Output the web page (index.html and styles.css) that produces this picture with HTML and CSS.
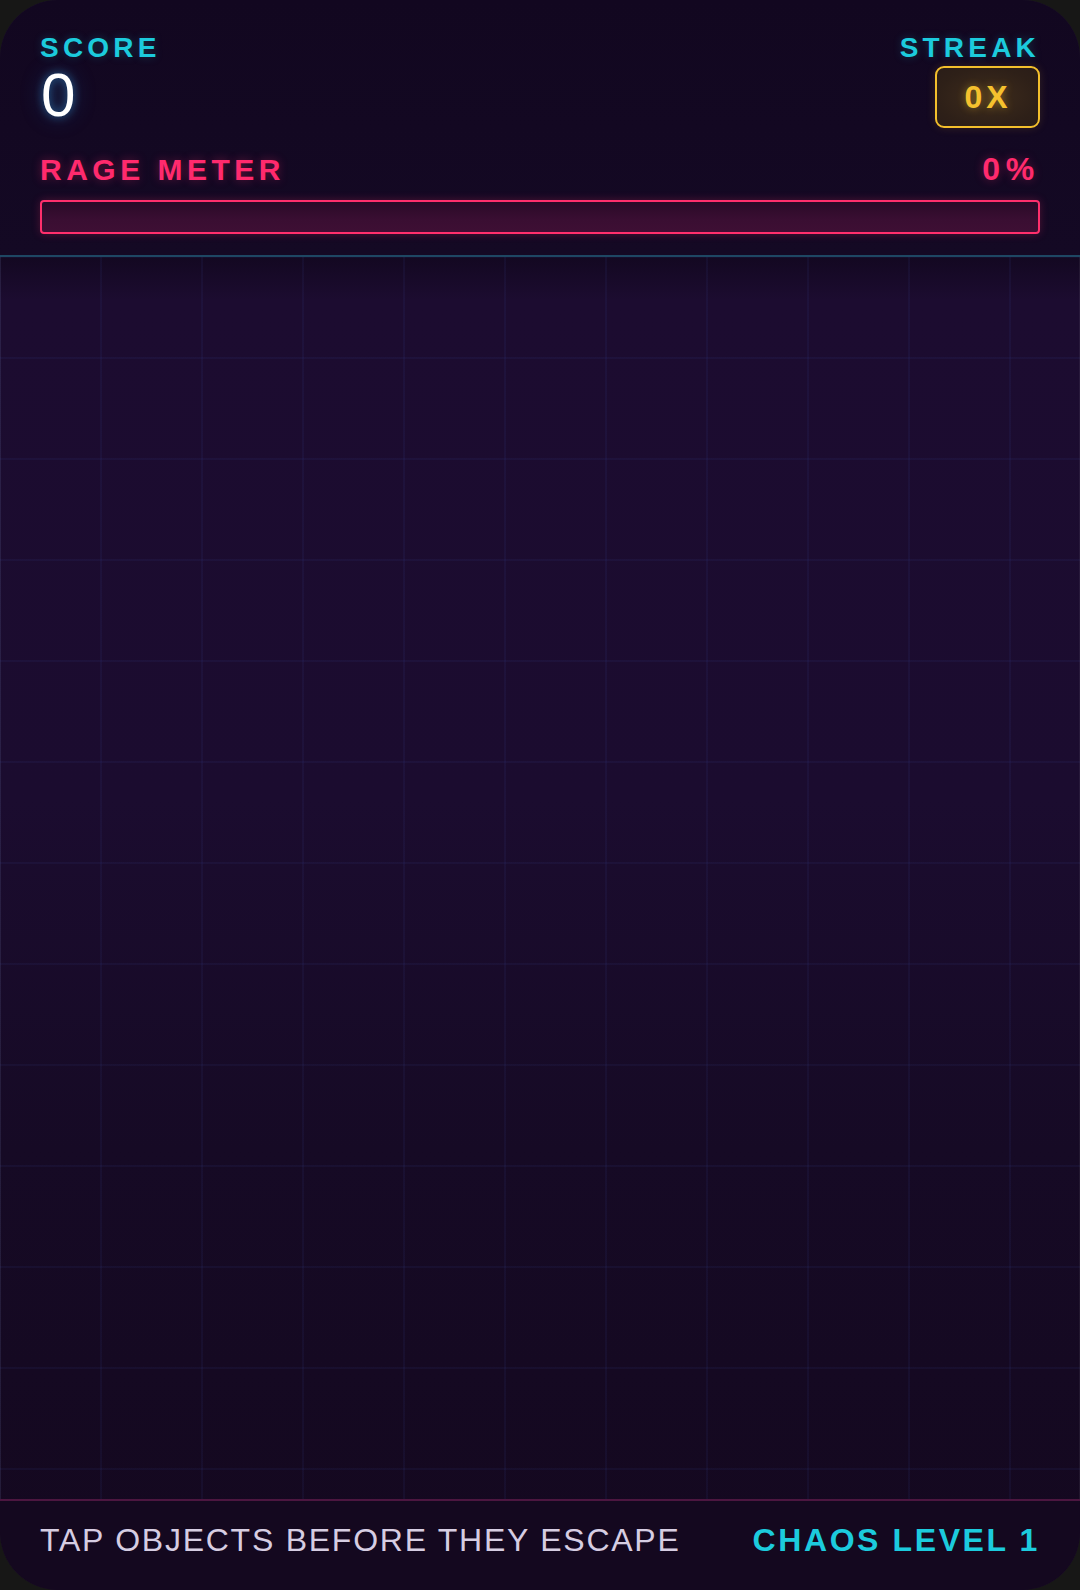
FILE: index.html
```html
<!DOCTYPE html>
<html lang="en">
<head>
<meta charset="utf-8">
<title>Rage Tap</title>
<link rel="stylesheet" href="styles.css">
</head>
<body>
<div class="card">
  <header class="hud">
    <div class="hud-top">
      <div class="stat">
        <div class="label">SCORE</div>
        <div class="score">0</div>
      </div>
      <div class="stat stat-right">
        <div class="label">STREAK</div>
        <div class="badge">0X</div>
      </div>
    </div>
    <div class="rage-row">
      <span class="rage-label">RAGE METER</span>
      <span class="rage-value">0%</span>
    </div>
    <div class="rage-bar"><div class="rage-fill" style="width:0%"></div></div>
  </header>
  <main class="arena"></main>
  <footer class="foot">
    <span class="hint">TAP OBJECTS BEFORE THEY ESCAPE</span>
    <span class="level">CHAOS LEVEL 1</span>
  </footer>
</div>
</body>
</html>
```
FILE: styles.css
```css
html, body {
  margin: 0;
  padding: 0;
  background: #171716;
}
body {
  width: 1080px;
  height: 1590px;
  font-family: "Liberation Sans", Arial, sans-serif;
}
.card {
  width: 1080px;
  height: 1590px;
  border-radius: 58px;
  overflow: hidden;
  display: flex;
  flex-direction: column;
  background: linear-gradient(180deg, #12081f 0px, #130821 256px, #1c0c30 300px, #1b0c2f 800px, #160a25 1150px, #14081f 1590px);
  box-shadow: inset 0 0 0 1px rgba(255,255,255,0.06);
}
.hud {
  padding: 32px 40px 21px;
  border-bottom: 2px solid #1e4763;
  background: linear-gradient(180deg, #120720 0%, #140924 100%);
}
.hud-top {
  display: flex;
  justify-content: space-between;
  align-items: flex-start;
}
.stat {
  display: flex;
  flex-direction: column;
}
.stat-right {
  align-items: flex-end;
}
.label {
  color: #1ccbdd;
  font-weight: 700;
  font-size: 28px;
  letter-spacing: 0.15em;
  text-shadow: 0 0 8px rgba(28, 203, 221, 0.25);
}
.score {
  color: #ffffff;
  font-size: 62px;
  line-height: 1;
  margin-left: 1px;
  text-shadow: 0 0 10px rgba(60, 180, 255, 0.55), 0 0 22px rgba(40, 140, 220, 0.35);
}
.badge {
  margin-top: 2px;
  box-sizing: border-box;
  width: 105px;
  height: 62px;
  border: 2px solid #f3bf2c;
  border-radius: 9px;
  background: radial-gradient(ellipse at center, #3e2c1c 0%, #2e2018 70%, #2a1d18 100%);
  color: #f5c12e;
  font-weight: 700;
  font-size: 32px;
  letter-spacing: 0.12em;
  display: flex;
  align-items: center;
  justify-content: center;
  padding-left: 1px;
  text-shadow: 0 0 8px rgba(245, 193, 46, 0.45);
  box-shadow: 0 0 10px rgba(243, 191, 44, 0.15);
}
.rage-row {
  margin-top: 24px;
  display: flex;
  justify-content: space-between;
  align-items: baseline;
  line-height: 34px;
}
.rage-label, .rage-value {
  color: #ff2a6d;
  font-weight: 700;
  font-size: 30px;
  letter-spacing: 0.15em;
  text-shadow: 0 0 10px rgba(255, 42, 109, 0.35);
}
.rage-value {
  font-size: 32px;
  letter-spacing: 0.18em;
}
.rage-bar {
  margin-top: 13px;
  height: 34px;
  box-sizing: border-box;
  border: 2px solid #ff2f6c;
  border-radius: 4px;
  background: linear-gradient(180deg, #2a0a28 0%, #3a0e32 60%, #3e0f34 100%);
  box-shadow: 0 0 8px rgba(255, 47, 108, 0.25);
  overflow: hidden;
}
.rage-fill {
  height: 100%;
  background: #ff2f6c;
}
.arena {
  flex: 1;
  background-image:
    linear-gradient(90deg, rgba(60, 80, 170, 0.09) 0, rgba(60, 80, 170, 0.09) 2px, transparent 2px),
    linear-gradient(180deg, rgba(60, 80, 170, 0.09) 0, rgba(60, 80, 170, 0.09) 2px, transparent 2px);
  background-size: 101px 101px;
  background-position: 100px 100px;
}
.foot {
  border-top: 2px solid #4c1640;
  padding: 21px 40px 31px;
  display: flex;
  justify-content: space-between;
  align-items: baseline;
  background: #14081f;
}
.hint {
  color: #d6cde2;
  font-size: 32px;
  letter-spacing: 1.75px;
}
.level {
  color: #1ccbdd;
  font-weight: 700;
  font-size: 32px;
  letter-spacing: 2.6px;
}
```
